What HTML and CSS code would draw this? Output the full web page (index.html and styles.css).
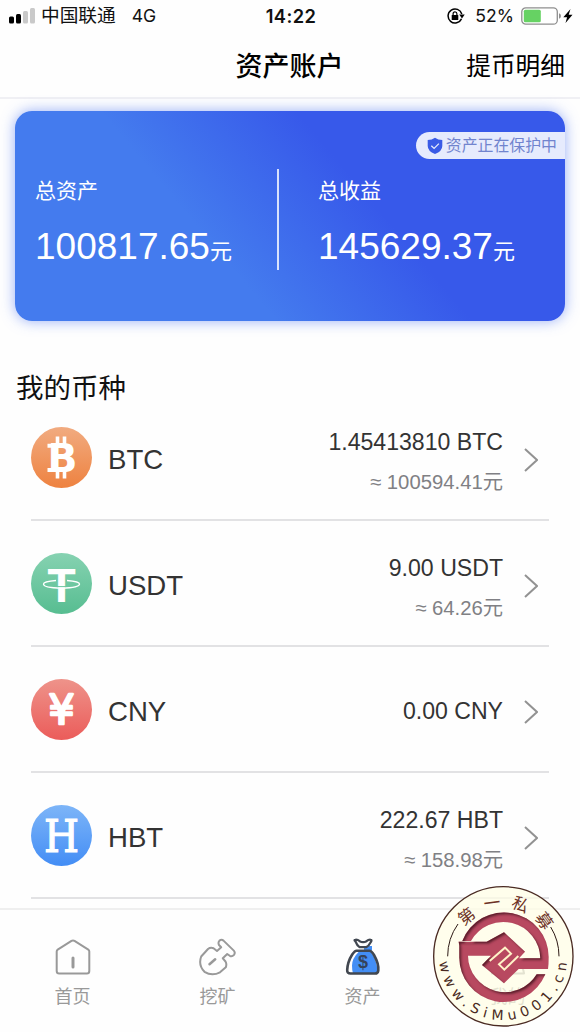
FILE: index.html
```
<!DOCTYPE html>
<html lang="zh-CN">
<head>
    <meta charset="UTF-8">
    <meta name="viewport" content="width=device-width, initial-scale=1.0">
    <title>资产账户</title>
    <link rel="stylesheet" href="styles.css">
</head>
<body>
    <div class="status-bar">
        <div class="status-left">
            <svg class="signal" width="27" height="16" viewBox="0 0 27 16">
                <rect x="0" y="8.5" width="5" height="7" rx="1.5" fill="#000"/>
                <rect x="7" y="6" width="5" height="9.5" rx="1.5" fill="#000"/>
                <rect x="14" y="3" width="5" height="12.5" rx="1.5" fill="#c9c9c9"/>
                <rect x="21" y="0" width="5" height="15.5" rx="1.5" fill="#c9c9c9"/>
            </svg>
            <span class="carrier">中国联通</span>
            <span class="network">4G</span>
        </div>
        <span class="time">14:22</span>
        <div class="status-right">
            <svg width="18" height="16" viewBox="0 0 18 16">
                <path d="M14.5 10.8A7 7 0 1 1 14.8 6" fill="none" stroke="#000" stroke-width="1.5"/>
                <path d="M12.2 6.5h5.5l-2.7 4z" fill="#000"/>
                <rect x="4.7" y="7" width="6.6" height="5" rx=".6" fill="#000"/>
                <path d="M6.1 7.5V5.7a1.9 1.9 0 0 1 3.8 0v1.8" fill="none" stroke="#000" stroke-width="1.2"/>
            </svg>
            <span class="percent">52%</span>
            <svg class="battery" width="52" height="18" viewBox="0 0 52 18">
                <rect x=".8" y=".8" width="35.5" height="16.4" rx="4" fill="#fff" stroke="#8e8e8e" stroke-width="1.3"/>
                <rect x="2.8" y="2.8" width="17" height="12.4" rx="1.5" fill="#66d263"/>
                <path d="M38 6.2q2 .6 2 2.800t-2 2.800z" fill="#8e8e8e"/>
                <path d="M49.5 2l-7.2 8.2h3.8L44.5 16l7-8.2h-3.8z" fill="#000"/>
            </svg>
        </div>
    </div>

    <div class="nav-bar">
        <h1>资产账户</h1>
        <a class="detail">提币明细</a>
    </div>

    <div class="card">
        <div class="protect">
            <svg width="16" height="18" viewBox="0 0 16 18">
                <path d="M8 .8Q11 3 15.3 3v6q0 5.2-7.3 8Q.7 14.2.7 9V3Q5 3 8 .8z" fill="#3a5be6"/>
                <path d="M4.3 8.7l2.8 2.7 4.8-4.8" fill="none" stroke="#e5eafc" stroke-width="1.3"/>
            </svg>
            <span>资产正在保护中</span>
        </div>
        <div class="total">
            <div class="label">总资产</div>
            <div class="money">100817.65<span>元</span></div>
        </div>
        <div class="total total-right">
            <div class="label">总收益</div>
            <div class="money">145629.37<span>元</span></div>
        </div>
    </div>

    <h2>我的币种</h2>
    <div class="coin-list">
        <div class="coin">
            <svg class="coin-icon" viewBox="0 0 61 61">
                <defs><linearGradient id="orange" x2="0" y2="1"><stop stop-color="#f1ab80"/><stop offset="1" stop-color="#ee8240"/></linearGradient></defs>
                <circle cx="30.5" cy="30.5" r="30.5" fill="url(#orange)"/>
                <path d="M26.5 9.5v9M33.5 9.5v9M26.5 43v8.5M33.5 43v8.5" stroke="#fff" stroke-width="3.6"/>
                <path d="M16.5 18.700h6M16.5 43h6" stroke="#fff" stroke-width="4"/>
                <text class="sym-b" x="16.5" y="45" font-size="38.5" textLength="30" lengthAdjust="spacingAndGlyphs">B</text>
            </svg>
            <span class="name">BTC</span>
            <div class="amount">
                <div class="count">1.45413810 BTC</div>
                <div class="worth">≈ 100594.41元</div>
            </div>
            <svg class="arrow" viewBox="0 0 14 24"><path d="M1 1l12 11L1 23"/></svg>
        </div>
        <div class="coin">
            <svg class="coin-icon" viewBox="0 0 61 61">
                <defs><linearGradient id="green" x2="0" y2="1"><stop stop-color="#86d2b1"/><stop offset="1" stop-color="#57bd91"/></linearGradient></defs>
                <circle cx="30.5" cy="30.5" r="30.5" fill="url(#green)"/>
                <text class="sym-t" x="30.5" y="49" font-size="47" text-anchor="middle">T</text>
                <path d="M25 27.5Q12.5 28.5 12.5 31q0 4 18 4t18-4q0-2.5-12.5-3.5" fill="none" stroke="#fff" stroke-width="1.4"/>
                <path d="M26 33.6h9" stroke="#6cc79f" stroke-width="1"/>
            </svg>
            <span class="name">USDT</span>
            <div class="amount">
                <div class="count">9.00 USDT</div>
                <div class="worth">≈ 64.26元</div>
            </div>
            <svg class="arrow" viewBox="0 0 14 24"><path d="M1 1l12 11L1 23"/></svg>
        </div>
        <div class="coin">
            <svg class="coin-icon" viewBox="0 0 61 61">
                <defs><linearGradient id="red" x2="0" y2="1"><stop stop-color="#ee938a"/><stop offset="1" stop-color="#eb5c5a"/></linearGradient></defs>
                <circle cx="30.5" cy="30.5" r="30.5" fill="url(#red)"/>
                <text class="sym-yen" x="17.5" y="45" font-size="41" textLength="26" lengthAdjust="spacingAndGlyphs">¥</text>
            </svg>
            <span class="name">CNY</span>
            <div class="amount single">
                <div class="count">0.00 CNY</div>
            </div>
            <svg class="arrow" viewBox="0 0 14 24"><path d="M1 1l12 11L1 23"/></svg>
        </div>
        <div class="coin">
            <svg class="coin-icon" viewBox="0 0 61 61">
                <defs><linearGradient id="blue" x2="0" y2="1"><stop stop-color="#7db5f8"/><stop offset="1" stop-color="#438df5"/></linearGradient></defs>
                <circle cx="30.5" cy="30.5" r="30.5" fill="url(#blue)"/>
                <text class="sym-h" x="13" y="46.5" font-size="44" textLength="35" lengthAdjust="spacingAndGlyphs">H</text>
            </svg>
            <span class="name">HBT</span>
            <div class="amount">
                <div class="count">222.67 HBT</div>
                <div class="worth">≈ 158.98元</div>
            </div>
            <svg class="arrow" viewBox="0 0 14 24"><path d="M1 1l12 11L1 23"/></svg>
        </div>
    </div>

    <div class="tab-bar">
        <div class="tab">
            <svg width="40" height="40" viewBox="0 0 40 40">
                <path d="M3.7 14.5q0-1.2 1-1.9L18.5 3.900q1.5-.9 3 0l13.8 8.700q1 .7 1 1.900V34q0 2.500-2.500 2.500H6.200q-2.500 0-2.500-2.500z"/>
                <path d="M20 21v9" stroke-width="3" stroke-linecap="round"/>
            </svg>
            <span>首页</span>
        </div>
        <div class="tab">
            <svg width="40" height="40" viewBox="0 0 40 40">
                <path d="M19 14L23.2 10.3 21 8Q19.8 5.5 21.5 3.6 23.5 2 25.5 3.6L35.8 13.6Q37.6 15.6 36 17.8 34 20 31.8 18.8L29.2 17 24.8 21.3 27.5 24.5Q29 27 27.8 30.3L22 35.3Q14 39.5 6.5 34.8 0 28 3.2 19.5L10 12Q12.5 10 15.5 11.2z"/>
                <path d="M11.5 27.300l5.700-5" stroke-width="2.5" stroke-linecap="round"/>
            </svg>
            <span>挖矿</span>
        </div>
        <div class="tab">
            <svg class="bag" width="40" height="40" viewBox="0 0 40 40">
                <path d="M16 14.5q-7 7-7 14 0 5 1 8h23q2 0 1.500-4Q33 21 27.500 14.500zM21 9h8v4.500H21z" fill="#438ef5" stroke="none"/>
                <path d="M12.5 4.5q-2-1.700 0-1.800 2.200-.2 4.200 1.500 3.400 2 6.800 0 2-1.700 4-1.500 2 .1 0 2.800-1.800 3.500-4 4.600h-7q-2.300-1.300-4-5.600z" stroke-width="2.2"/>
                <path d="M13.5 13.800h13q2 0 4.500 4.200 5 9 4.300 15.500-.3 3-3.300 3H7.500q-3.500 0-3.300-3.500Q4.500 25 9.200 17.500q2.600-3.700 4.300-3.700z" stroke-width="2.6"/>
                <text x="20" y="30.5" font-size="18" text-anchor="middle">$</text>
            </svg>
            <span>资产</span>
        </div>
        <div class="tab">
            <svg width="40" height="40" viewBox="0 0 40 40">
                <circle cx="20" cy="11" r="8"/>
                <path d="M4 36.5q2-14 16-14t16 14z"/>
            </svg>
            <span>我的</span>
        </div>
    </div>

    <!-- round seal over the corner -->
    <svg class="seal" viewBox="0 0 465 471">
        <defs>
            <path id="seal-top" d="M92 242A143 143 0 0 1 378 242"/>
            <path id="seal-bottom" d="M48 200A192 192 0 1 0 422 200"/>
            <filter id="inset">
                <feOffset in="SourceAlpha" dx="5" dy="6"/>
                <feGaussianBlur stdDeviation="2.5" result="moved"/>
                <feFlood flood-color="#3c1219" flood-opacity=".85"/>
                <feComposite in2="moved" operator="out"/>
                <feComposite in2="SourceAlpha" operator="in" result="shade"/>
                <feMerge><feMergeNode in="SourceGraphic"/><feMergeNode in="shade"/></feMerge>
            </filter>
        </defs>
        <circle cx="235" cy="244" r="209" fill="#fffde4" fill-opacity=".72" stroke="#4a2a22" stroke-width="4"/>
        <path d="M68 244A167 167 0 0 1 99 147M402 244A167 167 0 0 0 377 156" fill="none" stroke="#2d1a15" stroke-width="3"/>
        <g filter="url(#inset)">
            <!-- upper arc ends in the right bar, lower arc ends in the left bar -->
            <path d="M112 198A134 134 0 0 1 371 246Q371 268 369 282H281L237 325 171 270 198 242H129A111 111 0 0 0 335 298H361A134 134 0 0 1 103 246Q103 226 103 212L101 200H185L237 172 300 230 282 250H346A111 111 0 0 0 138 198z" fill="#b84a60"/>
        </g>
        <path d="M194 258L240 218 258 236 222 268 238 284 280 243" fill="none" stroke="#fff3c8" stroke-width="6"/>
        <text class="seal-cn"><textPath href="#seal-top" startOffset="54.5%" text-anchor="middle">第一私募</textPath></text>
        <text class="seal-url"><textPath href="#seal-bottom" startOffset="51%" text-anchor="middle">www.SiMu001.cn</textPath></text>
    </svg>
</body>
</html>
```
FILE: styles.css
```
* {
    box-sizing: border-box;
}
body {
    margin: 0;
    width: 580px;
    height: 1032px;
    overflow: hidden;
    background: #fefefe;
    font-family: "Liberation Sans", "Noto Sans CJK SC", sans-serif;
    color: #333;
    display: flex;
    flex-direction: column;
    position: relative;
}
.status-bar {
    height: 32px;
    flex: none;
    display: grid;
    grid-template-columns: 1fr auto 1fr;
    align-items: center;
    padding: 0 7px 0 9px;
    font-family: Inter, "Noto Sans CJK SC", sans-serif;
    font-size: 17.6px;
    line-height: 32px;
    color: #111;
}
.status-left, .status-right {
    display: flex;
    align-items: center;
}
.status-right {
    justify-content: flex-end;
}
.carrier {
    margin-left: 5px;
    font-size: 18.7px;
}
.network {
    margin-left: 16px;
}
.time {
    font-weight: 600;
    font-size: 18.3px;
    letter-spacing: 0.4px;
}
.percent {
    margin: 0 7px 0 10px;
}
.nav-bar {
    height: 67px;
    flex: none;
    display: grid;
    grid-template-columns: 1fr auto 1fr;
    align-items: center;
    border-bottom: 2px solid #f0f0f4;
    padding: 4px 15px 0 0;
    color: #000;
}
h1 {
    grid-column: 2;
    margin: 0 0 0 14px;
    font-size: 27px;
    font-weight: 500;
    line-height: 40px;
}
.detail {
    justify-self: end;
    font-size: 24.7px;
    line-height: 40px;
}
.card {
    position: relative;
    flex: none;
    display: grid;
    grid-template-columns: 264px 1fr;
    height: 210px;
    margin: 12px 15px 0;
    padding-top: 58px;
    border-radius: 17px;
    background: linear-gradient(50deg, #447bee 36%, #3759ea 63%);
    box-shadow: 0 0 14px rgba(68, 110, 240, 0.55);
    color: #fff;
}
.protect {
    position: absolute;
    top: 21px;
    right: 0;
    height: 27px;
    padding: 0 8px 0 11px;
    display: flex;
    align-items: center;
    gap: 3px;
    border-radius: 14px 0 0 14px;
    background: #e6ebfd;
    color: #7184ce;
    font-size: 15.9px;
    line-height: 24px;
}
.total {
    height: 101px;
    padding: 7px 0 0 20px;
    border-right: 2px solid rgba(255, 255, 255, 0.8);
}
.total-right {
    padding-left: 39px;
    border: none;
}
.label {
    font-size: 21px;
    line-height: 30px;
}
.money {
    margin-top: 18px;
    font-size: 37px;
    line-height: 46px;
    white-space: nowrap;
}
.money span {
    font-size: 22px;
}
h2 {
    margin: 48px 0 0 16px;
    font-size: 27.5px;
    font-weight: 400;
    line-height: 40px;
    height: 26px;
    flex: none;
    color: #111;
}
.coin-list {
    flex: none;
    margin: 0 31px;
}
.coin {
    height: 126px;
    display: flex;
    align-items: center;
    border-bottom: 2px solid #e2e2e4;
}
.coin-icon {
    width: 61px;
    height: 61px;
}
.coin-icon text {
    fill: #fff;
}
.sym-b {
    font-family: "DejaVu Sans", sans-serif;
    font-weight: bold;
}
.sym-t {
    font-family: Roboto, sans-serif;
    font-weight: bold;
}
.sym-yen {
    font-family: "DejaVu Sans", sans-serif;
    stroke: #fff;
    stroke-width: 2.5;
    stroke-linejoin: round;
}
.sym-h {
    font-family: "DejaVu Serif", serif;
    stroke: #fff;
    stroke-width: 1.2;
}
.name {
    margin: 5px 0 0 16px;
    font-size: 27.6px;
}
.amount {
    margin: 9px 21px 0 auto;
    text-align: right;
}
.single {
    margin-top: 4px;
}
.count {
    font-size: 23.1px;
    line-height: 40px;
}
.worth {
    font-size: 20.3px;
    line-height: 40px;
    color: #808084;
}
.arrow {
    width: 14px;
    height: 24px;
    margin: 5px 11px 0 0;
    fill: none;
    stroke: #929292;
    stroke-width: 2;
}
.tab-bar {
    position: absolute;
    left: 0;
    right: 0;
    bottom: 0;
    height: 124px;
    padding-top: 27px;
    display: grid;
    grid-template-columns: repeat(4, 145px);
    border-top: 2px solid #efefef;
    background: #fefefe;
}
.tab {
    display: flex;
    flex-direction: column;
    align-items: center;
    font-size: 18px;
    line-height: 40px;
    color: #999;
}
.tab svg {
    fill: none;
    stroke: #999;
    stroke-width: 2;
    stroke-linejoin: round;
}
.tab .bag {
    stroke: #414750;
}
.bag text {
    font-weight: bold;
    fill: #34435c;
    stroke: none;
}
.seal {
    position: absolute;
    left: 425px;
    top: 875px;
    width: 155px;
    height: 157px;
}
.seal-cn {
    font-family: "Noto Sans CJK SC", sans-serif;
    font-size: 50px;
    letter-spacing: 27px;
    fill: #6d3226;
}
.seal-url {
    font-family: "DejaVu Sans", sans-serif;
    font-size: 42px;
    letter-spacing: 16px;
    fill: #4a2a22;
}
```
